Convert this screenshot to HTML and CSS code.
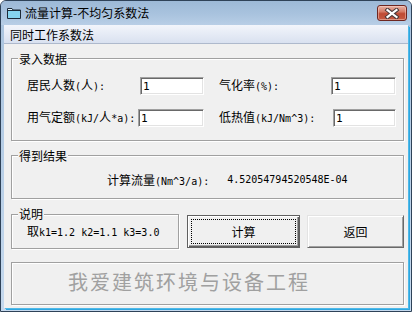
FILE: index.html
```html
<!DOCTYPE html>
<html lang="zh-CN">
<head>
<meta charset="utf-8">
<title>流量计算-不均匀系数法</title>
<link rel="stylesheet" href="styles.css">
</head>
<body>
<div class="win">
  <div class="titlebar">
    <svg class="appicon" width="14" height="12" viewBox="0 0 14 12">
      <path d="M0.5 1.5h4.5l1 1.5h7.5v8.5h-13z" fill="#e4f6fc" stroke="#1d2a38"/>
      <rect x="1" y="4" width="12" height="7" fill="#86d4ef"/>
      <path d="M1 3.5h12" stroke="#1d2a38"/>
    </svg>
    <span class="title">流量计算-不均匀系数法</span>
    <button class="close" type="button" aria-label="关闭">
      <svg width="16" height="11" viewBox="0 0 16 11">
        <path d="M3.5 2l9 7M12.5 2l-9 7" stroke="#4b3b3b" stroke-width="4.2" stroke-linecap="square"/>
        <path d="M3.5 2l9 7M12.5 2l-9 7" stroke="#ffffff" stroke-width="2.2" stroke-linecap="square"/>
      </svg>
    </button>
  </div>
  <div class="client">
    <div class="menubar"><span class="menu">同时工作系数法</span></div>
    <div class="content">
      <div class="group g-input">
        <div class="legend">录入数据</div>
        <div class="row r-first">
          <span class="lab w113">居民人数<span class="m">(</span>人<span class="m">):</span></span>
          <input class="txt w64" type="text" value="1">
          <span class="lab w112 gapl">气化率<span class="m">(%):</span></span>
          <input class="txt w65" type="text" value="1">
        </div>
        <div class="row r-next">
          <span class="lab w111">用气定额<span class="m">(kJ/</span>人<span class="m">*a):</span></span>
          <input class="txt w66" type="text" value="1">
          <span class="lab w114 gapl">低热值<span class="m">(kJ/Nm^3):</span></span>
          <input class="txt w63" type="text" value="1">
        </div>
      </div>

      <div class="group g-result">
        <div class="legend">得到结果</div>
        <div class="result">
          <span class="lab">计算流量<span class="m">(Nm^3/a):</span></span>
          <span class="m value">4.52054794520548E-04</span>
        </div>
      </div>

      <div class="actions">
        <div class="group g-note">
          <div class="legend">说明</div>
          <div class="note">取<span class="m">k1=1.2 k2=1.1 k3=3.0</span></div>
        </div>
        <button class="btn btn-default" type="button">计算</button>
        <button class="btn btn-back" type="button">返回</button>
      </div>

      <div class="group g-banner">
        <div class="banner">我爱建筑环境与设备工程</div>
      </div>
    </div>
  </div>
</div>
</body>
</html>
```
FILE: styles.css
```css
* { box-sizing: border-box; }
html, body { margin: 0; padding: 0; }
body {
  width: 412px;
  height: 312px;
  overflow: hidden;
  background: #ffffff;
  font-family: "Noto Sans CJK SC", sans-serif;
  font-size: 12px;
  color: #000;
}
.m {
  font-family: "DejaVu Sans Mono", monospace;
  font-size: 10px;
}
.win {
  width: 412px;
  height: 312px;
  display: flex;
  flex-direction: column;
  border: 1px solid #2f4258;
  border-radius: 6px 6px 0 0;
  background: linear-gradient(180deg, #a9c3de 0%, #c5d9ee 100%);
  overflow: hidden;
}
.titlebar {
  height: 24px;
  flex: none;
  display: flex;
  align-items: center;
  padding-left: 6px;
  background: linear-gradient(180deg, #9db9d7 0%, #a9c3de 55%, #b8cee6 100%);
}
.appicon { display: block; flex: none; }
.title {
  margin-left: 4px;
  line-height: 14px;
  color: #000;
}
.close {
  margin-left: auto;
  margin-right: 4px;
  width: 30px;
  height: 16px;
  padding: 0;
  border: 1px solid #6e2620;
  border-radius: 3px;
  background: linear-gradient(180deg, #e6b1a4 0%, #d67c67 40%, #bf4a33 55%, #c65a42 100%);
  box-shadow: inset 0 0 0 1px rgba(255, 220, 210, 0.45);
  display: flex;
  align-items: center;
  justify-content: center;
}
.close svg { display: block; }
.client {
  flex: 1;
  margin: 0 3px 3px;
  background: #f0f0f0;
  display: flex;
  flex-direction: column;
  box-shadow: 1px 1px 0 #4fb9e8, 2px 2px 0 #2ea6df;
}
.menubar {
  height: 19px;
  flex: none;
  padding: 1px 0 0 6px;
  line-height: 17px;
  background: linear-gradient(180deg, #f2f5fb 0%, #e7ecf6 45%, #d9e1f0 100%);
  border-bottom: 1px solid #aeb9cc;
}
.content {
  padding: 0 4px 0 7px;
}
.group {
  border: 1px solid #a0a0a0;
  box-shadow: inset 1px 1px 0 #ffffff, 1px 1px 0 #ffffff;
  padding-left: 15px;
}
.legend {
  width: fit-content;
  margin: -7px 0 0 -9px;
  padding: 0 1px;
  line-height: 14px;
  background: #f0f0f0;
}
.g-input {
  margin-top: 14px;
  padding-bottom: 13px;
}
.row {
  display: flex;
  align-items: center;
  height: 18px;
}
.r-first { margin-top: 11px; }
.r-next { margin-top: 14px; }
.lab { line-height: 14px; white-space: nowrap; flex: none; }
.w111 { width: 111px; }
.w112 { width: 112px; }
.w113 { width: 113px; }
.w114 { width: 114px; }
.gapl { margin-left: 15px; }
.txt {
  flex: none;
  height: 18px;
  margin: 0;
  padding: 0 0 0 2px;
  border: 1px solid;
  border-color: #a0a0a0 #ffffff #ffffff #a0a0a0;
  box-shadow: inset 1px 1px 0 #696969, inset -1px -1px 0 #e3e3e3;
  background: #ffffff;
  font-family: "DejaVu Sans Mono", monospace;
  font-size: 11px;
  color: #000;
  outline: none;
}
.w63 { width: 63px; }
.w64 { width: 64px; }
.w65 { width: 65px; }
.w66 { width: 66px; }
.g-result {
  margin-top: 14px;
  padding-left: 95px;
  padding-bottom: 9px;
}
.g-result .legend { margin-left: -89px; }
.result {
  margin-top: 10px;
  line-height: 14px;
  display: flex;
  white-space: nowrap;
}
.value { margin-left: 18px; }
.actions {
  margin-top: 15px;
  display: flex;
  align-items: flex-start;
}
.g-note {
  width: 168px;
  flex: none;
  padding-bottom: 8px;
}
.g-note .legend {
  margin-top: -8px;
  line-height: 13px;
}
.note {
  margin-top: 4px;
  line-height: 14px;
  white-space: nowrap;
}
.btn {
  flex: none;
  height: 33px;
  margin-top: 1px;
  padding: 0;
  background: #f0f0f0;
  font-family: "Noto Sans CJK SC", sans-serif;
  font-size: 12px;
  color: #000;
  border: 1px solid;
}
.btn-default {
  width: 113px;
  margin-left: 8px;
  border-color: #5f5f5f;
  box-shadow: inset 1px 1px 0 #ffffff, inset -1px -1px 0 #5f5f5f, inset -2px -2px 0 #a0a0a0;
  outline: 1px dotted #000;
  outline-offset: -5px;
}
.btn-back {
  width: 97px;
  margin-left: 7px;
  border-color: #e3e3e3 #696969 #696969 #e3e3e3;
  box-shadow: inset 1px 1px 0 #ffffff, inset -1px -1px 0 #a0a0a0;
}
.g-banner {
  margin-top: 13px;
  padding: 7px 0 10px 56px;
}
.banner {
  font-size: 20px;
  line-height: 24px;
  letter-spacing: 2px;
  color: #a0a0a0;
  white-space: nowrap;
}
```
